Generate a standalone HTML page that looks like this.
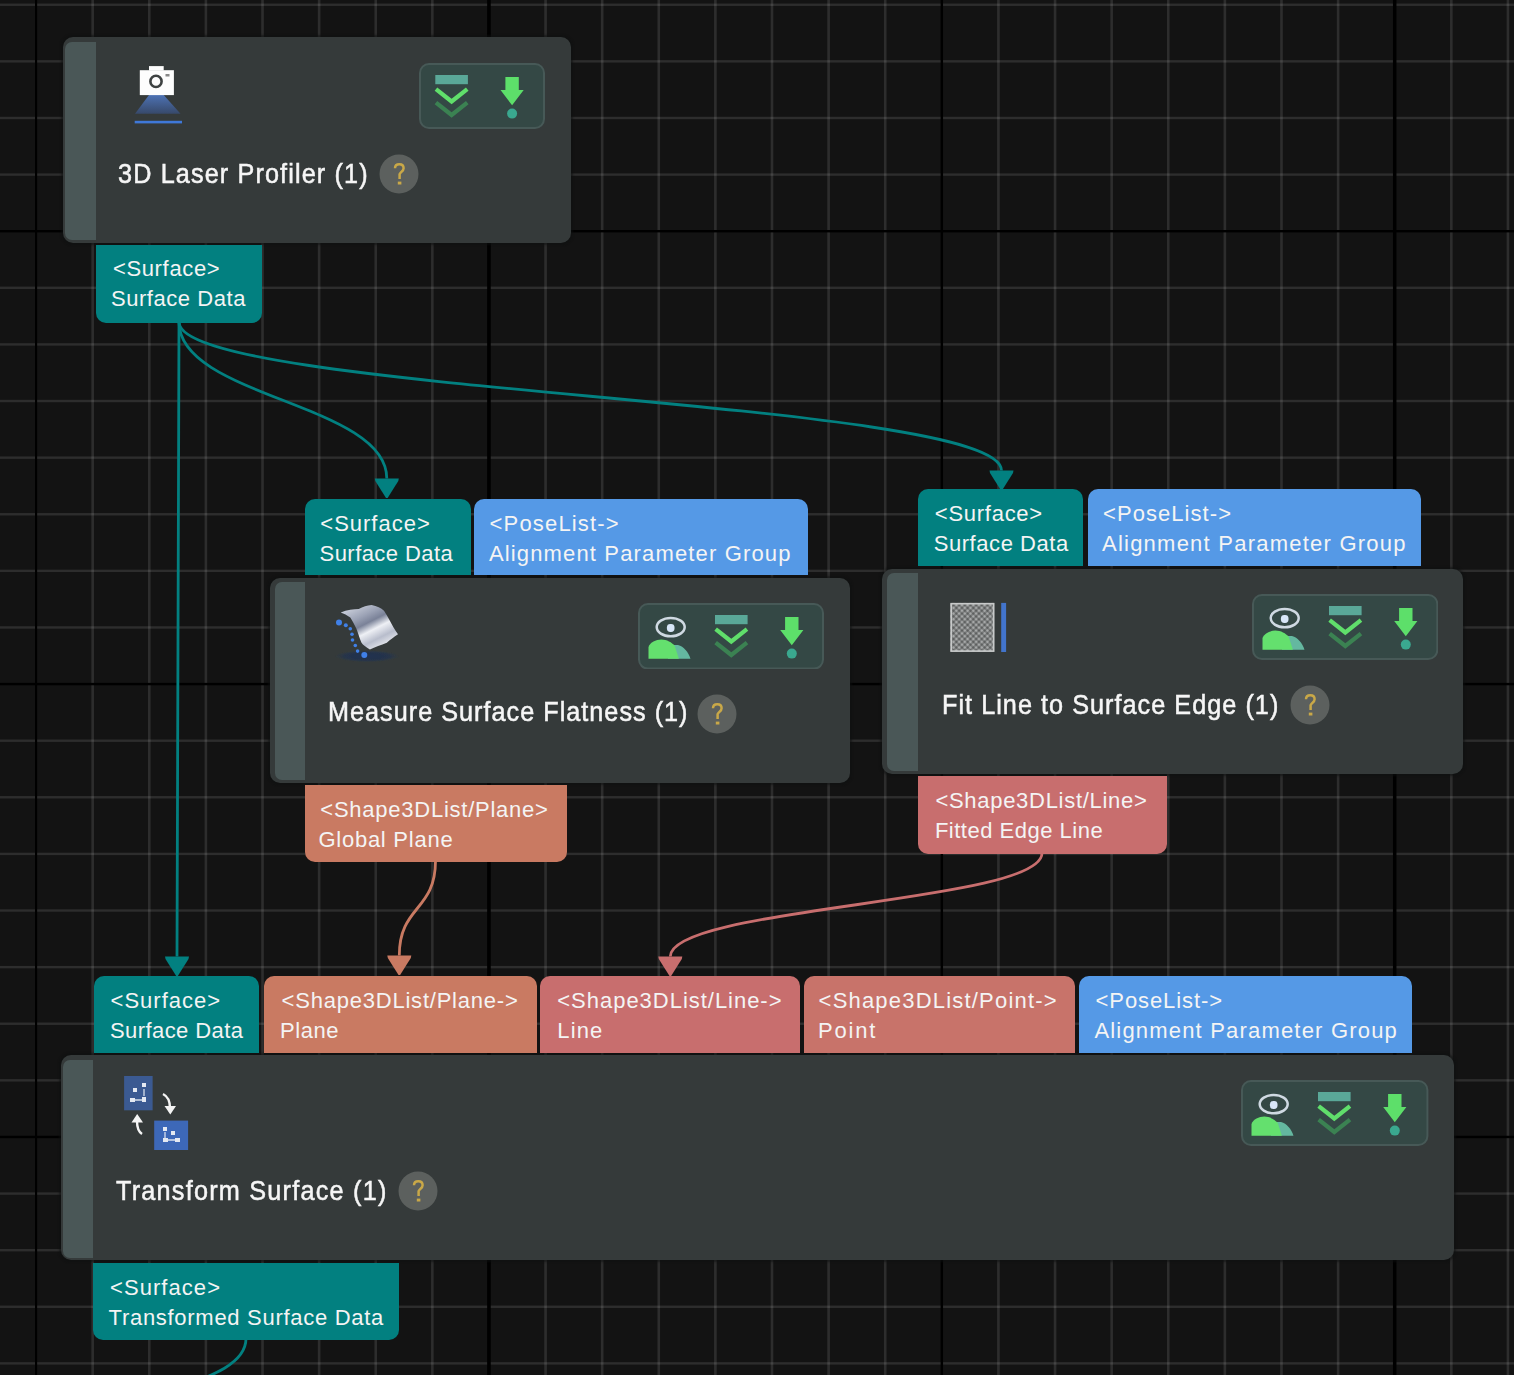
<!DOCTYPE html>
<html><head><meta charset="utf-8"><style>
html,body{margin:0;padding:0}
body{width:1514px;height:1375px;background:#131313;position:relative;overflow:hidden;font-family:"Liberation Sans",sans-serif}
.abs{position:absolute}
.node{position:absolute;background:#353a3a;border-radius:10px;box-shadow:0 0 2px 2px rgba(14,16,16,0.55)}
.strip{position:absolute;background:#4a5757;border-radius:7px 0 0 7px}
.port{position:absolute}
.t{position:absolute;white-space:nowrap;transform-origin:0 0}
.tt{-webkit-text-stroke:0.55px currentColor}
</style></head><body>
<svg class="abs" width="1514" height="1375" style="left:0;top:0"><rect x="91.38" y="0" width="2.6" height="1375" fill="rgba(255,255,255,0.115)"/><rect x="147.99" y="0" width="2.6" height="1375" fill="rgba(255,255,255,0.115)"/><rect x="204.60" y="0" width="2.6" height="1375" fill="rgba(255,255,255,0.115)"/><rect x="261.21" y="0" width="2.6" height="1375" fill="rgba(255,255,255,0.115)"/><rect x="317.82" y="0" width="2.6" height="1375" fill="rgba(255,255,255,0.115)"/><rect x="374.43" y="0" width="2.6" height="1375" fill="rgba(255,255,255,0.115)"/><rect x="431.04" y="0" width="2.6" height="1375" fill="rgba(255,255,255,0.115)"/><rect x="544.26" y="0" width="2.6" height="1375" fill="rgba(255,255,255,0.115)"/><rect x="600.87" y="0" width="2.6" height="1375" fill="rgba(255,255,255,0.115)"/><rect x="657.48" y="0" width="2.6" height="1375" fill="rgba(255,255,255,0.115)"/><rect x="714.09" y="0" width="2.6" height="1375" fill="rgba(255,255,255,0.115)"/><rect x="770.70" y="0" width="2.6" height="1375" fill="rgba(255,255,255,0.115)"/><rect x="827.31" y="0" width="2.6" height="1375" fill="rgba(255,255,255,0.115)"/><rect x="883.92" y="0" width="2.6" height="1375" fill="rgba(255,255,255,0.115)"/><rect x="997.14" y="0" width="2.6" height="1375" fill="rgba(255,255,255,0.115)"/><rect x="1053.75" y="0" width="2.6" height="1375" fill="rgba(255,255,255,0.115)"/><rect x="1110.36" y="0" width="2.6" height="1375" fill="rgba(255,255,255,0.115)"/><rect x="1166.97" y="0" width="2.6" height="1375" fill="rgba(255,255,255,0.115)"/><rect x="1223.58" y="0" width="2.6" height="1375" fill="rgba(255,255,255,0.115)"/><rect x="1280.19" y="0" width="2.6" height="1375" fill="rgba(255,255,255,0.115)"/><rect x="1336.80" y="0" width="2.6" height="1375" fill="rgba(255,255,255,0.115)"/><rect x="1450.02" y="0" width="2.6" height="1375" fill="rgba(255,255,255,0.115)"/><rect x="1506.63" y="0" width="2.6" height="1375" fill="rgba(255,255,255,0.115)"/><rect x="0" y="3.56" width="1514" height="2.4" fill="rgba(255,255,255,0.115)"/><rect x="0" y="60.17" width="1514" height="2.4" fill="rgba(255,255,255,0.115)"/><rect x="0" y="116.78" width="1514" height="2.4" fill="rgba(255,255,255,0.115)"/><rect x="0" y="173.39" width="1514" height="2.4" fill="rgba(255,255,255,0.115)"/><rect x="0" y="286.61" width="1514" height="2.4" fill="rgba(255,255,255,0.115)"/><rect x="0" y="343.22" width="1514" height="2.4" fill="rgba(255,255,255,0.115)"/><rect x="0" y="399.83" width="1514" height="2.4" fill="rgba(255,255,255,0.115)"/><rect x="0" y="456.44" width="1514" height="2.4" fill="rgba(255,255,255,0.115)"/><rect x="0" y="513.05" width="1514" height="2.4" fill="rgba(255,255,255,0.115)"/><rect x="0" y="569.66" width="1514" height="2.4" fill="rgba(255,255,255,0.115)"/><rect x="0" y="626.27" width="1514" height="2.4" fill="rgba(255,255,255,0.115)"/><rect x="0" y="739.49" width="1514" height="2.4" fill="rgba(255,255,255,0.115)"/><rect x="0" y="796.10" width="1514" height="2.4" fill="rgba(255,255,255,0.115)"/><rect x="0" y="852.71" width="1514" height="2.4" fill="rgba(255,255,255,0.115)"/><rect x="0" y="909.32" width="1514" height="2.4" fill="rgba(255,255,255,0.115)"/><rect x="0" y="965.93" width="1514" height="2.4" fill="rgba(255,255,255,0.115)"/><rect x="0" y="1022.54" width="1514" height="2.4" fill="rgba(255,255,255,0.115)"/><rect x="0" y="1079.15" width="1514" height="2.4" fill="rgba(255,255,255,0.115)"/><rect x="0" y="1192.37" width="1514" height="2.4" fill="rgba(255,255,255,0.115)"/><rect x="0" y="1248.98" width="1514" height="2.4" fill="rgba(255,255,255,0.115)"/><rect x="0" y="1305.59" width="1514" height="2.4" fill="rgba(255,255,255,0.115)"/><rect x="0" y="1362.20" width="1514" height="2.4" fill="rgba(255,255,255,0.115)"/><rect x="35.02" y="0" width="2.1" height="1375" fill="#000"/><rect x="487.15" y="0" width="3.6" height="1375" fill="#000"/><rect x="940.63" y="0" width="2.4" height="1375" fill="#000"/><rect x="1392.96" y="0" width="3.5" height="1375" fill="#000"/><rect x="0" y="230.00" width="1514" height="2.4" fill="#000"/><rect x="0" y="682.88" width="1514" height="2.4" fill="#000"/><rect x="0" y="1135.76" width="1514" height="2.4" fill="#000"/></svg>
<svg class="abs" width="1514" height="1375" style="left:0;top:0"><path d="M179,322 C179,626.6 177,651.9 177,956.5" stroke="#028080" stroke-width="2.8" fill="none"/><path d="M165,956.5 L189,956.5 L188.5,959.0 L177.8,976.0 L176.2,976.0 L165.5,959.0 Z" fill="#028080"/><path d="M179,322 C179,397.1 386.8,403.4 386.8,478.5" stroke="#028080" stroke-width="2.8" fill="none"/><path d="M374.8,478.5 L398.8,478.5 L398.3,481.0 L387.6,498.0 L386.0,498.0 L375.3,481.0 Z" fill="#028080"/><path d="M179,322 C179,393.3 1001.5,399.2 1001.5,470.5" stroke="#028080" stroke-width="2.8" fill="none"/><path d="M989.5,470.5 L1013.5,470.5 L1013.0,473.0 L1002.3,490.0 L1000.7,490.0 L990.0,473.0 Z" fill="#028080"/><path d="M435.5,861 C435.5,911.0 399.3,905.5 399.3,955.5" stroke="#c97a62" stroke-width="2.8" fill="none"/><path d="M387.3,955.5 L411.3,955.5 L410.8,958.0 L400.1,975.0 L398.5,975.0 L387.8,958.0 Z" fill="#c97a62"/><path d="M1042,853 C1042,903.0 670.3,906.5 670.3,956.5" stroke="#c86e6e" stroke-width="2.8" fill="none"/><path d="M658.3,956.5 L682.3,956.5 L681.8,959.0 L671.0999999999999,976.0 L669.5,976.0 L658.8,959.0 Z" fill="#c86e6e"/><path d="M246,1338.5 C246,1388.5 108,1388.7 108,1438.7" stroke="#028080" stroke-width="2.8" fill="none"/></svg>
<div class="node" style="left:62.5px;top:37px;width:508.0px;height:205.5px"></div><div class="strip" style="left:65px;top:42px;width:30.5px;height:198.0px"></div>
<div class="node" style="left:270px;top:578.2px;width:580.0px;height:205.3px"></div><div class="strip" style="left:275px;top:582px;width:30.0px;height:197.5px"></div>
<div class="node" style="left:882.3px;top:568.5px;width:580.7px;height:205.5px"></div><div class="strip" style="left:886.8px;top:573px;width:31.2px;height:197.5px"></div>
<div class="node" style="left:60.5px;top:1054.7px;width:1393.0px;height:205.3px"></div><div class="strip" style="left:63.1px;top:1059.8px;width:29.9px;height:197.9px"></div>
<div class="port" style="left:96px;top:244.5px;width:166.0px;height:78.5px;background:#028080;border-radius:0 0 10px 10px"></div><div class="t" style="left:112.90px;top:258.28px;font-size:22px;line-height:22px;letter-spacing:0.659px;color:#f4f4f4">&lt;Surface&gt;</div><div class="t" style="left:111.00px;top:288.28px;font-size:22px;line-height:22px;letter-spacing:0.543px;color:#f4f4f4">Surface Data</div>
<div class="port" style="left:304.8px;top:498.8px;width:165.8px;height:76.5px;background:#028080;border-radius:10px 10px 0 0"></div><div class="t" style="left:320.30px;top:512.58px;font-size:22px;line-height:22px;letter-spacing:0.996px;color:#f4f4f4">&lt;Surface&gt;</div><div class="t" style="left:319.60px;top:542.58px;font-size:22px;line-height:22px;letter-spacing:0.434px;color:#f4f4f4">Surface Data</div>
<div class="port" style="left:474px;top:498.8px;width:334.3px;height:76.5px;background:#5599e6;border-radius:10px 10px 0 0"></div><div class="t" style="left:489.60px;top:512.58px;font-size:22px;line-height:22px;letter-spacing:1.158px;color:#f4f4f4">&lt;PoseList-&gt;</div><div class="t" style="left:488.90px;top:542.58px;font-size:22px;line-height:22px;letter-spacing:1.150px;color:#f4f4f4">Alignment Parameter Group</div>
<div class="port" style="left:304.6px;top:785.2px;width:262.6px;height:77.0px;background:#c97a62;border-radius:0 0 10px 10px"></div><div class="t" style="left:320.30px;top:798.98px;font-size:22px;line-height:22px;letter-spacing:0.752px;color:#f4f4f4">&lt;Shape3DList/Plane&gt;</div><div class="t" style="left:318.40px;top:828.98px;font-size:22px;line-height:22px;letter-spacing:0.754px;color:#f4f4f4">Global Plane</div>
<div class="port" style="left:917.8px;top:489.3px;width:165.5px;height:77.2px;background:#028080;border-radius:10px 10px 0 0"></div><div class="t" style="left:934.80px;top:503.08px;font-size:22px;line-height:22px;letter-spacing:0.734px;color:#f4f4f4">&lt;Surface&gt;</div><div class="t" style="left:933.70px;top:533.08px;font-size:22px;line-height:22px;letter-spacing:0.561px;color:#f4f4f4">Surface Data</div>
<div class="port" style="left:1088px;top:489.3px;width:332.8px;height:77.2px;background:#5599e6;border-radius:10px 10px 0 0"></div><div class="t" style="left:1103.00px;top:503.08px;font-size:22px;line-height:22px;letter-spacing:1.058px;color:#f4f4f4">&lt;PoseList-&gt;</div><div class="t" style="left:1102.00px;top:533.08px;font-size:22px;line-height:22px;letter-spacing:1.233px;color:#f4f4f4">Alignment Parameter Group</div>
<div class="port" style="left:918px;top:776.2px;width:249.2px;height:77.8px;background:#c86e6e;border-radius:0 0 10px 10px"></div><div class="t" style="left:935.40px;top:789.98px;font-size:22px;line-height:22px;letter-spacing:0.707px;color:#f4f4f4">&lt;Shape3DList/Line&gt;</div><div class="t" style="left:934.90px;top:819.98px;font-size:22px;line-height:22px;letter-spacing:0.506px;color:#f4f4f4">Fitted Edge Line</div>
<div class="port" style="left:93.7px;top:976px;width:165.6px;height:77.0px;background:#028080;border-radius:10px 10px 0 0"></div><div class="t" style="left:110.60px;top:989.78px;font-size:22px;line-height:22px;letter-spacing:0.996px;color:#f4f4f4">&lt;Surface&gt;</div><div class="t" style="left:109.90px;top:1019.78px;font-size:22px;line-height:22px;letter-spacing:0.434px;color:#f4f4f4">Surface Data</div>
<div class="port" style="left:263.7px;top:976px;width:273.0px;height:77.0px;background:#c97a62;border-radius:10px 10px 0 0"></div><div class="t" style="left:281.60px;top:989.78px;font-size:22px;line-height:22px;letter-spacing:0.780px;color:#f4f4f4">&lt;Shape3DList/Plane-&gt;</div><div class="t" style="left:279.90px;top:1019.78px;font-size:22px;line-height:22px;letter-spacing:0.609px;color:#f4f4f4">Plane</div>
<div class="port" style="left:540px;top:976px;width:259.7px;height:77.0px;background:#c86e6e;border-radius:10px 10px 0 0"></div><div class="t" style="left:557.30px;top:989.78px;font-size:22px;line-height:22px;letter-spacing:0.973px;color:#f4f4f4">&lt;Shape3DList/Line-&gt;</div><div class="t" style="left:557.30px;top:1019.78px;font-size:22px;line-height:22px;letter-spacing:1.107px;color:#f4f4f4">Line</div>
<div class="port" style="left:803.5px;top:976px;width:271.3px;height:77.0px;background:#c8736a;border-radius:10px 10px 0 0"></div><div class="t" style="left:818.60px;top:989.78px;font-size:22px;line-height:22px;letter-spacing:1.196px;color:#f4f4f4">&lt;Shape3DList/Point-&gt;</div><div class="t" style="left:817.90px;top:1019.78px;font-size:22px;line-height:22px;letter-spacing:1.835px;color:#f4f4f4">Point</div>
<div class="port" style="left:1078.6px;top:976px;width:333.7px;height:77.0px;background:#5599e6;border-radius:10px 10px 0 0"></div><div class="t" style="left:1095.60px;top:989.78px;font-size:22px;line-height:22px;letter-spacing:0.898px;color:#f4f4f4">&lt;PoseList-&gt;</div><div class="t" style="left:1094.40px;top:1019.78px;font-size:22px;line-height:22px;letter-spacing:1.187px;color:#f4f4f4">Alignment Parameter Group</div>
<div class="port" style="left:93.2px;top:1263px;width:305.6px;height:76.5px;background:#028080;border-radius:0 0 10px 10px"></div><div class="t" style="left:110.00px;top:1276.78px;font-size:22px;line-height:22px;letter-spacing:1.059px;color:#f4f4f4">&lt;Surface&gt;</div><div class="t" style="left:108.60px;top:1306.78px;font-size:22px;line-height:22px;letter-spacing:0.707px;color:#f4f4f4">Transformed Surface Data</div>
<div class="t tt" style="left:118.00px;top:160.00px;font-size:28px;line-height:28px;letter-spacing:1.263px;transform:scaleX(0.9000);color:#f6f6f6">3D Laser Profiler (1)</div>
<div class="t tt" style="left:328.40px;top:698.30px;font-size:28px;line-height:28px;letter-spacing:1.134px;transform:scaleX(0.9000);color:#f6f6f6">Measure Surface Flatness (1)</div>
<div class="t tt" style="left:941.50px;top:691.30px;font-size:28px;line-height:28px;letter-spacing:1.157px;transform:scaleX(0.9000);color:#f6f6f6">Fit Line to Surface Edge (1)</div>
<div class="t tt" style="left:115.70px;top:1176.80px;font-size:28px;line-height:28px;letter-spacing:1.377px;transform:scaleX(0.9000);color:#f6f6f6">Transform Surface (1)</div>
<svg class="abs" style="left:379.4px;top:153.5px" width="40" height="40"><circle cx="20" cy="20" r="19.5" fill="#5c605e"/><path d="M16,14.2 C16,11.2 17.8,10.2 20.3,10.2 C23.2,10.2 24.6,11.8 24.6,14.2 C24.6,17 21.6,18 20.6,20.2 L20.6,25" fill="none" stroke="#c9a848" stroke-width="2.5"/><rect x="18.8" y="27.6" width="3.6" height="2.9" fill="#c9a848"/></svg>
<svg class="abs" style="left:696.7px;top:694.0px" width="40" height="40"><circle cx="20" cy="20" r="19.5" fill="#5c605e"/><path d="M16,14.2 C16,11.2 17.8,10.2 20.3,10.2 C23.2,10.2 24.6,11.8 24.6,14.2 C24.6,17 21.6,18 20.6,20.2 L20.6,25" fill="none" stroke="#c9a848" stroke-width="2.5"/><rect x="18.8" y="27.6" width="3.6" height="2.9" fill="#c9a848"/></svg>
<svg class="abs" style="left:1289.9px;top:684.6px" width="40" height="40"><circle cx="20" cy="20" r="19.5" fill="#5c605e"/><path d="M16,14.2 C16,11.2 17.8,10.2 20.3,10.2 C23.2,10.2 24.6,11.8 24.6,14.2 C24.6,17 21.6,18 20.6,20.2 L20.6,25" fill="none" stroke="#c9a848" stroke-width="2.5"/><rect x="18.8" y="27.6" width="3.6" height="2.9" fill="#c9a848"/></svg>
<svg class="abs" style="left:397.8px;top:1171.4px" width="40" height="40"><circle cx="20" cy="20" r="19.5" fill="#5c605e"/><path d="M16,14.2 C16,11.2 17.8,10.2 20.3,10.2 C23.2,10.2 24.6,11.8 24.6,14.2 C24.6,17 21.6,18 20.6,20.2 L20.6,25" fill="none" stroke="#c9a848" stroke-width="2.5"/><rect x="18.8" y="27.6" width="3.6" height="2.9" fill="#c9a848"/></svg>
<svg class="abs" style="left:419.3px;top:63px" width="126" height="66"><rect x="1" y="1" width="124" height="64" rx="9" fill="#344845" stroke="#475957" stroke-width="2"/><rect x="16.3" y="12" width="32.6" height="9.2" fill="#5aa898"/><path d="M18.6,27.5 L32.6,38.5 L46.6,27.5" fill="none" stroke="#60df6b" stroke-width="4.2" stroke-linecap="square"/><path d="M18.6,41 L32.6,52 L46.6,41" fill="none" stroke="#3b8252" stroke-width="4.2" stroke-linecap="square"/><path d="M86.39999999999999,14 L99.8,14 L99.8,27 L104.69999999999999,27 L93.1,42.3 L81.5,27 L86.39999999999999,27 Z" fill="#5ddf6a"/><circle cx="93.1" cy="50.6" r="5" fill="#3aa88f"/></svg>
<svg class="abs" style="left:637.9px;top:602.6px" width="186" height="66.6"><rect x="1" y="1" width="184" height="64.6" rx="9" fill="#344845" stroke="#475957" stroke-width="2"/><path d="M29.999999999999996,55.8 L29.999999999999996,42 L40.0,42 C45.8,43.5 50.3,49 52.5,55.8 Z" fill="#64b8a0"/><path d="M10.499999999999996,55.8 L10.499999999999996,44 C12.299999999999997,39.5 17.799999999999997,36.6 23.299999999999997,36.6 C28.799999999999997,36.6 33.8,39.5 36.8,43 L40.9,55.8 Z" fill="#64e06e"/><ellipse cx="32.699999999999996" cy="24.1" rx="14" ry="9.2" fill="none" stroke="#cfd9e2" stroke-width="2.5"/><rect x="28.9" y="21" width="7.6" height="8" rx="3.4" fill="#d8e6f8"/><rect x="77.0" y="12" width="32.6" height="9.2" fill="#5aa898"/><path d="M79.3,27.5 L93.3,38.5 L107.3,27.5" fill="none" stroke="#60df6b" stroke-width="4.2" stroke-linecap="square"/><path d="M79.3,41 L93.3,52 L107.3,41" fill="none" stroke="#3b8252" stroke-width="4.2" stroke-linecap="square"/><path d="M147.10000000000002,14 L160.5,14 L160.5,27 L165.4,27 L153.8,42.3 L142.20000000000002,27 L147.10000000000002,27 Z" fill="#5ddf6a"/><circle cx="153.8" cy="50.6" r="5" fill="#3aa88f"/></svg>
<svg class="abs" style="left:1251.7px;top:594.2px" width="186.3" height="66"><rect x="1" y="1" width="184.3" height="64" rx="9" fill="#344845" stroke="#475957" stroke-width="2"/><path d="M29.999999999999996,55.8 L29.999999999999996,42 L40.0,42 C45.8,43.5 50.3,49 52.5,55.8 Z" fill="#64b8a0"/><path d="M10.499999999999996,55.8 L10.499999999999996,44 C12.299999999999997,39.5 17.799999999999997,36.6 23.299999999999997,36.6 C28.799999999999997,36.6 33.8,39.5 36.8,43 L40.9,55.8 Z" fill="#64e06e"/><ellipse cx="32.699999999999996" cy="24.1" rx="14" ry="9.2" fill="none" stroke="#cfd9e2" stroke-width="2.5"/><rect x="28.9" y="21" width="7.6" height="8" rx="3.4" fill="#d8e6f8"/><rect x="77.0" y="12" width="32.6" height="9.2" fill="#5aa898"/><path d="M79.3,27.5 L93.3,38.5 L107.3,27.5" fill="none" stroke="#60df6b" stroke-width="4.2" stroke-linecap="square"/><path d="M79.3,41 L93.3,52 L107.3,41" fill="none" stroke="#3b8252" stroke-width="4.2" stroke-linecap="square"/><path d="M147.10000000000002,14 L160.5,14 L160.5,27 L165.4,27 L153.8,42.3 L142.20000000000002,27 L147.10000000000002,27 Z" fill="#5ddf6a"/><circle cx="153.8" cy="50.6" r="5" fill="#3aa88f"/></svg>
<svg class="abs" style="left:1241.4px;top:1080px" width="187.4" height="66"><rect x="1" y="1" width="185.4" height="64" rx="9" fill="#344845" stroke="#475957" stroke-width="2"/><path d="M29.999999999999996,55.8 L29.999999999999996,42 L40.0,42 C45.8,43.5 50.3,49 52.5,55.8 Z" fill="#64b8a0"/><path d="M10.499999999999996,55.8 L10.499999999999996,44 C12.299999999999997,39.5 17.799999999999997,36.6 23.299999999999997,36.6 C28.799999999999997,36.6 33.8,39.5 36.8,43 L40.9,55.8 Z" fill="#64e06e"/><ellipse cx="32.699999999999996" cy="24.1" rx="14" ry="9.2" fill="none" stroke="#cfd9e2" stroke-width="2.5"/><rect x="28.9" y="21" width="7.6" height="8" rx="3.4" fill="#d8e6f8"/><rect x="77.0" y="12" width="32.6" height="9.2" fill="#5aa898"/><path d="M79.3,27.5 L93.3,38.5 L107.3,27.5" fill="none" stroke="#60df6b" stroke-width="4.2" stroke-linecap="square"/><path d="M79.3,41 L93.3,52 L107.3,41" fill="none" stroke="#3b8252" stroke-width="4.2" stroke-linecap="square"/><path d="M147.10000000000002,14 L160.5,14 L160.5,27 L165.4,27 L153.8,42.3 L142.20000000000002,27 L147.10000000000002,27 Z" fill="#5ddf6a"/><circle cx="153.8" cy="50.6" r="5" fill="#3aa88f"/></svg>
<svg class="abs" style="left:130px;top:60px" width="60" height="70">
<defs><linearGradient id="cg" x1="0" y1="0" x2="0" y2="1"><stop offset="0" stop-color="#4d72b4"/><stop offset="1" stop-color="#37496a"/></linearGradient></defs>
<path d="M19,35 L33.7,35 L50.5,53.7 L5,53.7 Z" fill="url(#cg)"/>
<rect x="4.7" y="60.8" width="47.3" height="2.6" fill="#3f78d8"/>
<rect x="9.8" y="10.2" width="34.1" height="24.9" fill="#fdfdfd"/>
<rect x="19" y="6.1" width="14.7" height="4.5" fill="#fdfdfd"/>
<circle cx="26" cy="21.4" r="5.6" fill="none" stroke="#3e4242" stroke-width="2.6"/>
<rect x="35.5" y="14" width="4" height="2.5" fill="#888"/>
</svg>
<svg class="abs" style="left:330px;top:598px" width="75" height="70">
<defs><linearGradient id="sg" x1="0.1" y1="0" x2="0.75" y2="1"><stop offset="0" stop-color="#d6dae4"/><stop offset="0.3" stop-color="#9ca3b6"/><stop offset="0.45" stop-color="#7a8298"/><stop offset="0.6" stop-color="#eef0f5"/><stop offset="0.78" stop-color="#b8bdcc"/><stop offset="1" stop-color="#f4f5f8"/></linearGradient>
<radialGradient id="shd" cx="0.5" cy="0.5" r="0.5"><stop offset="0" stop-color="#1f3050"/><stop offset="0.7" stop-color="#26344a"/><stop offset="1" stop-color="#2c3a48" stop-opacity="0"/></radialGradient>
<filter id="bl" x="-20%" y="-20%" width="140%" height="140%"><feGaussianBlur stdDeviation="0.7"/></filter></defs>
<g filter="url(#bl)">
<ellipse cx="37" cy="58.2" rx="32" ry="6" fill="url(#shd)"/>
<path d="M10.7,14.4 C17,12 24,11 28.7,11 C33,9 37,7.5 41.6,7.1 C47,8 51,10 54,12.7 C56,16 58,19 59.6,22.3 C62,27 65,32 68,36.3 C64,39 60,42 56.8,44.7 C51,47 45,49 39.9,51.5 C36,49 33,47 31.5,44.7 C29.5,40 28,35 26.4,30.7 C24,26 22,22 20.3,19.5 C17,17 14,15.5 10.7,14.4 Z" fill="url(#sg)"/>
<g fill="#3f80e8"><circle cx="9" cy="24.5" r="3"/><circle cx="15.8" cy="27.3" r="2"/><circle cx="20.3" cy="30.7" r="1.8"/><circle cx="22" cy="36.3" r="1.8"/><circle cx="22.5" cy="42" r="1.8"/><circle cx="25.3" cy="47.5" r="1.8"/><circle cx="27.6" cy="53.1" r="1.8"/><circle cx="34.3" cy="57" r="3"/></g>
</g>
</svg>
<svg class="abs" style="left:945px;top:598px" width="70" height="60">
<defs><pattern id="chk" width="4" height="4" patternUnits="userSpaceOnUse" patternTransform="rotate(45)">
<rect width="4" height="4" fill="#7e8080"/><rect width="2" height="2" fill="#a6a8a8"/><rect x="2" y="2" width="2" height="2" fill="#5e6060"/></pattern></defs>
<rect x="5.4" y="4.9" width="44" height="49" fill="url(#chk)"/>
<rect x="6.2" y="5.7" width="42.4" height="47.4" fill="none" stroke="#c8caca" stroke-width="1.6"/>
<rect x="56.2" y="4.9" width="4.9" height="49.1" fill="#4274cc"/>
</svg>
<svg class="abs" style="left:118px;top:1070px" width="77" height="88">
<defs><filter id="bl2" x="-20%" y="-20%" width="140%" height="140%"><feGaussianBlur stdDeviation="0.45"/></filter></defs>
<g filter="url(#bl2)">
<rect x="6.1" y="6" width="28.5" height="34.3" fill="#3a5a92"/>
<rect x="36.2" y="50.6" width="33.9" height="29.4" fill="#3d68b8"/>
<g fill="#e4e9f2">
<rect x="15" y="18" width="4" height="4"/><rect x="24" y="13" width="4" height="4"/><rect x="12" y="28" width="5" height="4"/><rect x="24" y="27" width="4" height="5"/><rect x="17" y="29" width="7" height="2" opacity="0.7"/><rect x="25" y="19" width="2" height="7" opacity="0.6"/>
<rect x="45" y="57" width="4" height="4"/><rect x="53" y="61" width="4" height="4"/><rect x="45" y="68" width="5" height="4"/><rect x="57" y="68" width="5" height="4"/><rect x="46" y="62" width="2" height="6" opacity="0.6"/><rect x="50" y="69" width="7" height="2" opacity="0.7"/>
</g>
<path d="M45,24 C49,26 52,30 52,38" stroke="#f4f4f4" stroke-width="2.4" fill="none"/>
<path d="M46.5,36 L58,36 L52.3,44.5 Z" fill="#f4f4f4"/>
<path d="M24,64 C21,62 19,58 19,51" stroke="#f4f4f4" stroke-width="2.4" fill="none"/>
<path d="M13.5,52.5 L25,52.5 L19.2,44 Z" fill="#f4f4f4"/>
</g>
</svg>
</body></html>
